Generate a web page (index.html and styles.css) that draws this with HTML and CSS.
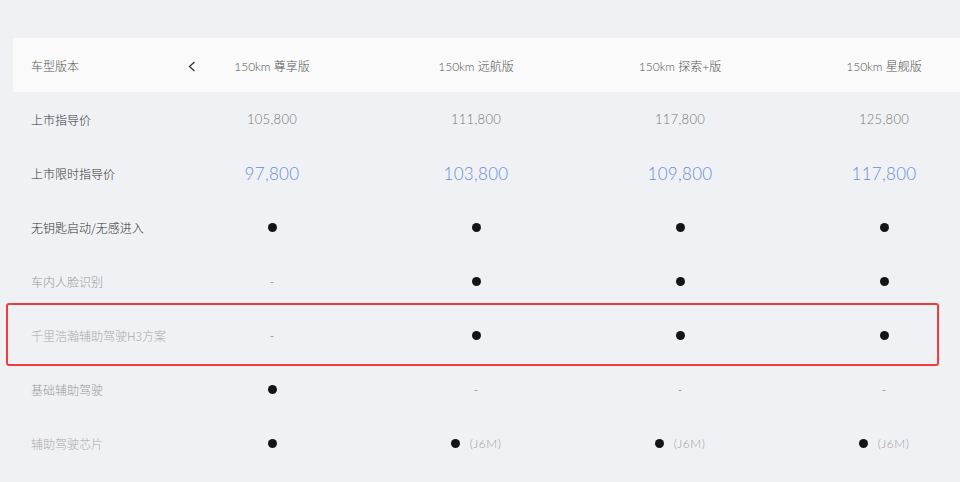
FILE: index.html
```html
<!DOCTYPE html>
<html lang="zh-CN">
<head>
    <meta charset="UTF-8">
    <title>参数配置</title>
    <link rel="stylesheet" href="styles.css">
</head>
<body>
    <div class="page">
        <div class="table">
            <!-- header -->
            <div class="row head">
                <div class="label">车型版本
                    <svg class="prev" width="8" height="11" viewBox="0 0 8 11"><polyline points="6.5,1 1.5,5.5 6.5,10" fill="none" stroke="#333" stroke-width="1.3"/></svg>
                </div>
                <div class="cell">150km 尊享版</div>
                <div class="cell">150km 远航版</div>
                <div class="cell">150km 探索+版</div>
                <div class="cell">150km 星舰版</div>
                <div class="cell"></div>
            </div>

            <div class="row">
                <div class="label dark">上市指导价</div>
                <div class="cell num">105,800</div>
                <div class="cell num">111,800</div>
                <div class="cell num">117,800</div>
                <div class="cell num">125,800</div>
            </div>

            <div class="row">
                <div class="label dark">上市限时指导价</div>
                <div class="cell price">97,800</div>
                <div class="cell price">103,800</div>
                <div class="cell price">109,800</div>
                <div class="cell price">117,800</div>
            </div>

            <div class="row">
                <div class="label dark">无钥匙启动/无感进入</div>
                <div class="cell"><i class="dot"></i></div>
                <div class="cell"><i class="dot"></i></div>
                <div class="cell"><i class="dot"></i></div>
                <div class="cell"><i class="dot"></i></div>
            </div>

            <div class="row">
                <div class="label">车内人脸识别</div>
                <div class="cell dash">-</div>
                <div class="cell"><i class="dot"></i></div>
                <div class="cell"><i class="dot"></i></div>
                <div class="cell"><i class="dot"></i></div>
            </div>

            <div class="row">
                <div class="label light">千里浩瀚辅助驾驶H3方案</div>
                <div class="cell dash">-</div>
                <div class="cell"><i class="dot"></i></div>
                <div class="cell"><i class="dot"></i></div>
                <div class="cell"><i class="dot"></i></div>
            </div>

            <div class="row">
                <div class="label">基础辅助驾驶</div>
                <div class="cell"><i class="dot"></i></div>
                <div class="cell dash">-</div>
                <div class="cell dash">-</div>
                <div class="cell dash">-</div>
            </div>

            <div class="row">
                <div class="label light">辅助驾驶芯片</div>
                <div class="cell"><i class="dot"></i></div>
                <div class="cell"><i class="dot"></i><span class="note">(J6M)</span></div>
                <div class="cell"><i class="dot"></i><span class="note">(J6M)</span></div>
                <div class="cell"><i class="dot"></i><span class="note">(J6M)</span></div>
            </div>
        </div>

        <!-- highlight frame -->
        <div class="mark"></div>
    </div>
</body>
</html>
```

FILE: styles.css
```css
body {
    margin: 0;
    background-color: #f0f1f5;
    font-family: Lato, "Noto Sans CJK SC", sans-serif;
    overflow: hidden;
}
.page {
    position: relative;
    height: 482px;
    padding: 38px 0 0 13px;
    box-sizing: border-box;
}
.table {
    width: 1200px;
}
.row {
    display: grid;
    grid-template-columns: 157px repeat(5, 204px);
    height: 54px;
    align-items: center;
}
.head {
    background-color: #fafafa;
}
.label {
    position: relative;
    padding-left: 18px;
    font-family: "Noto Sans CJK SC", sans-serif;
    font-size: 12px;
    font-weight: 300;
    color: #999;
    height: 100%;
    display: flex;
    align-items: center;
}
.head .label {
    color: #555;
}
.label.dark {
    color: #333;
}
.label.light {
    color: #aaa;
}
.prev {
    position: absolute;
    left: 175px;
    top: 23px;
}
.cell {
    display: flex;
    justify-content: center;
    align-items: center;
    font-size: 12px;
    color: #666;
    font-weight: 300;
}
.head .cell {
    color: #555;
}
.num {
    font-size: 13px;
    color: #777;
    letter-spacing: 0.3px;
}
.price {
    font-size: 17px;
    color: #6a8dd4;
    letter-spacing: 0.3px;
}
.dot {
    display: inline-block;
    width: 9px;
    height: 9px;
    border-radius: 50%;
    background-color: #151515;
}
.dash {
    color: #555;
    font-size: 12px;
}
.note {
    margin-left: 10px;
    font-size: 12px;
    color: #999;
    letter-spacing: 0.5px;
}
.mark {
    position: absolute;
    left: 6px;
    top: 303px;
    width: 929px;
    height: 59px;
    border: 2px solid #f43a3a;
    border-radius: 3px;
}
```
